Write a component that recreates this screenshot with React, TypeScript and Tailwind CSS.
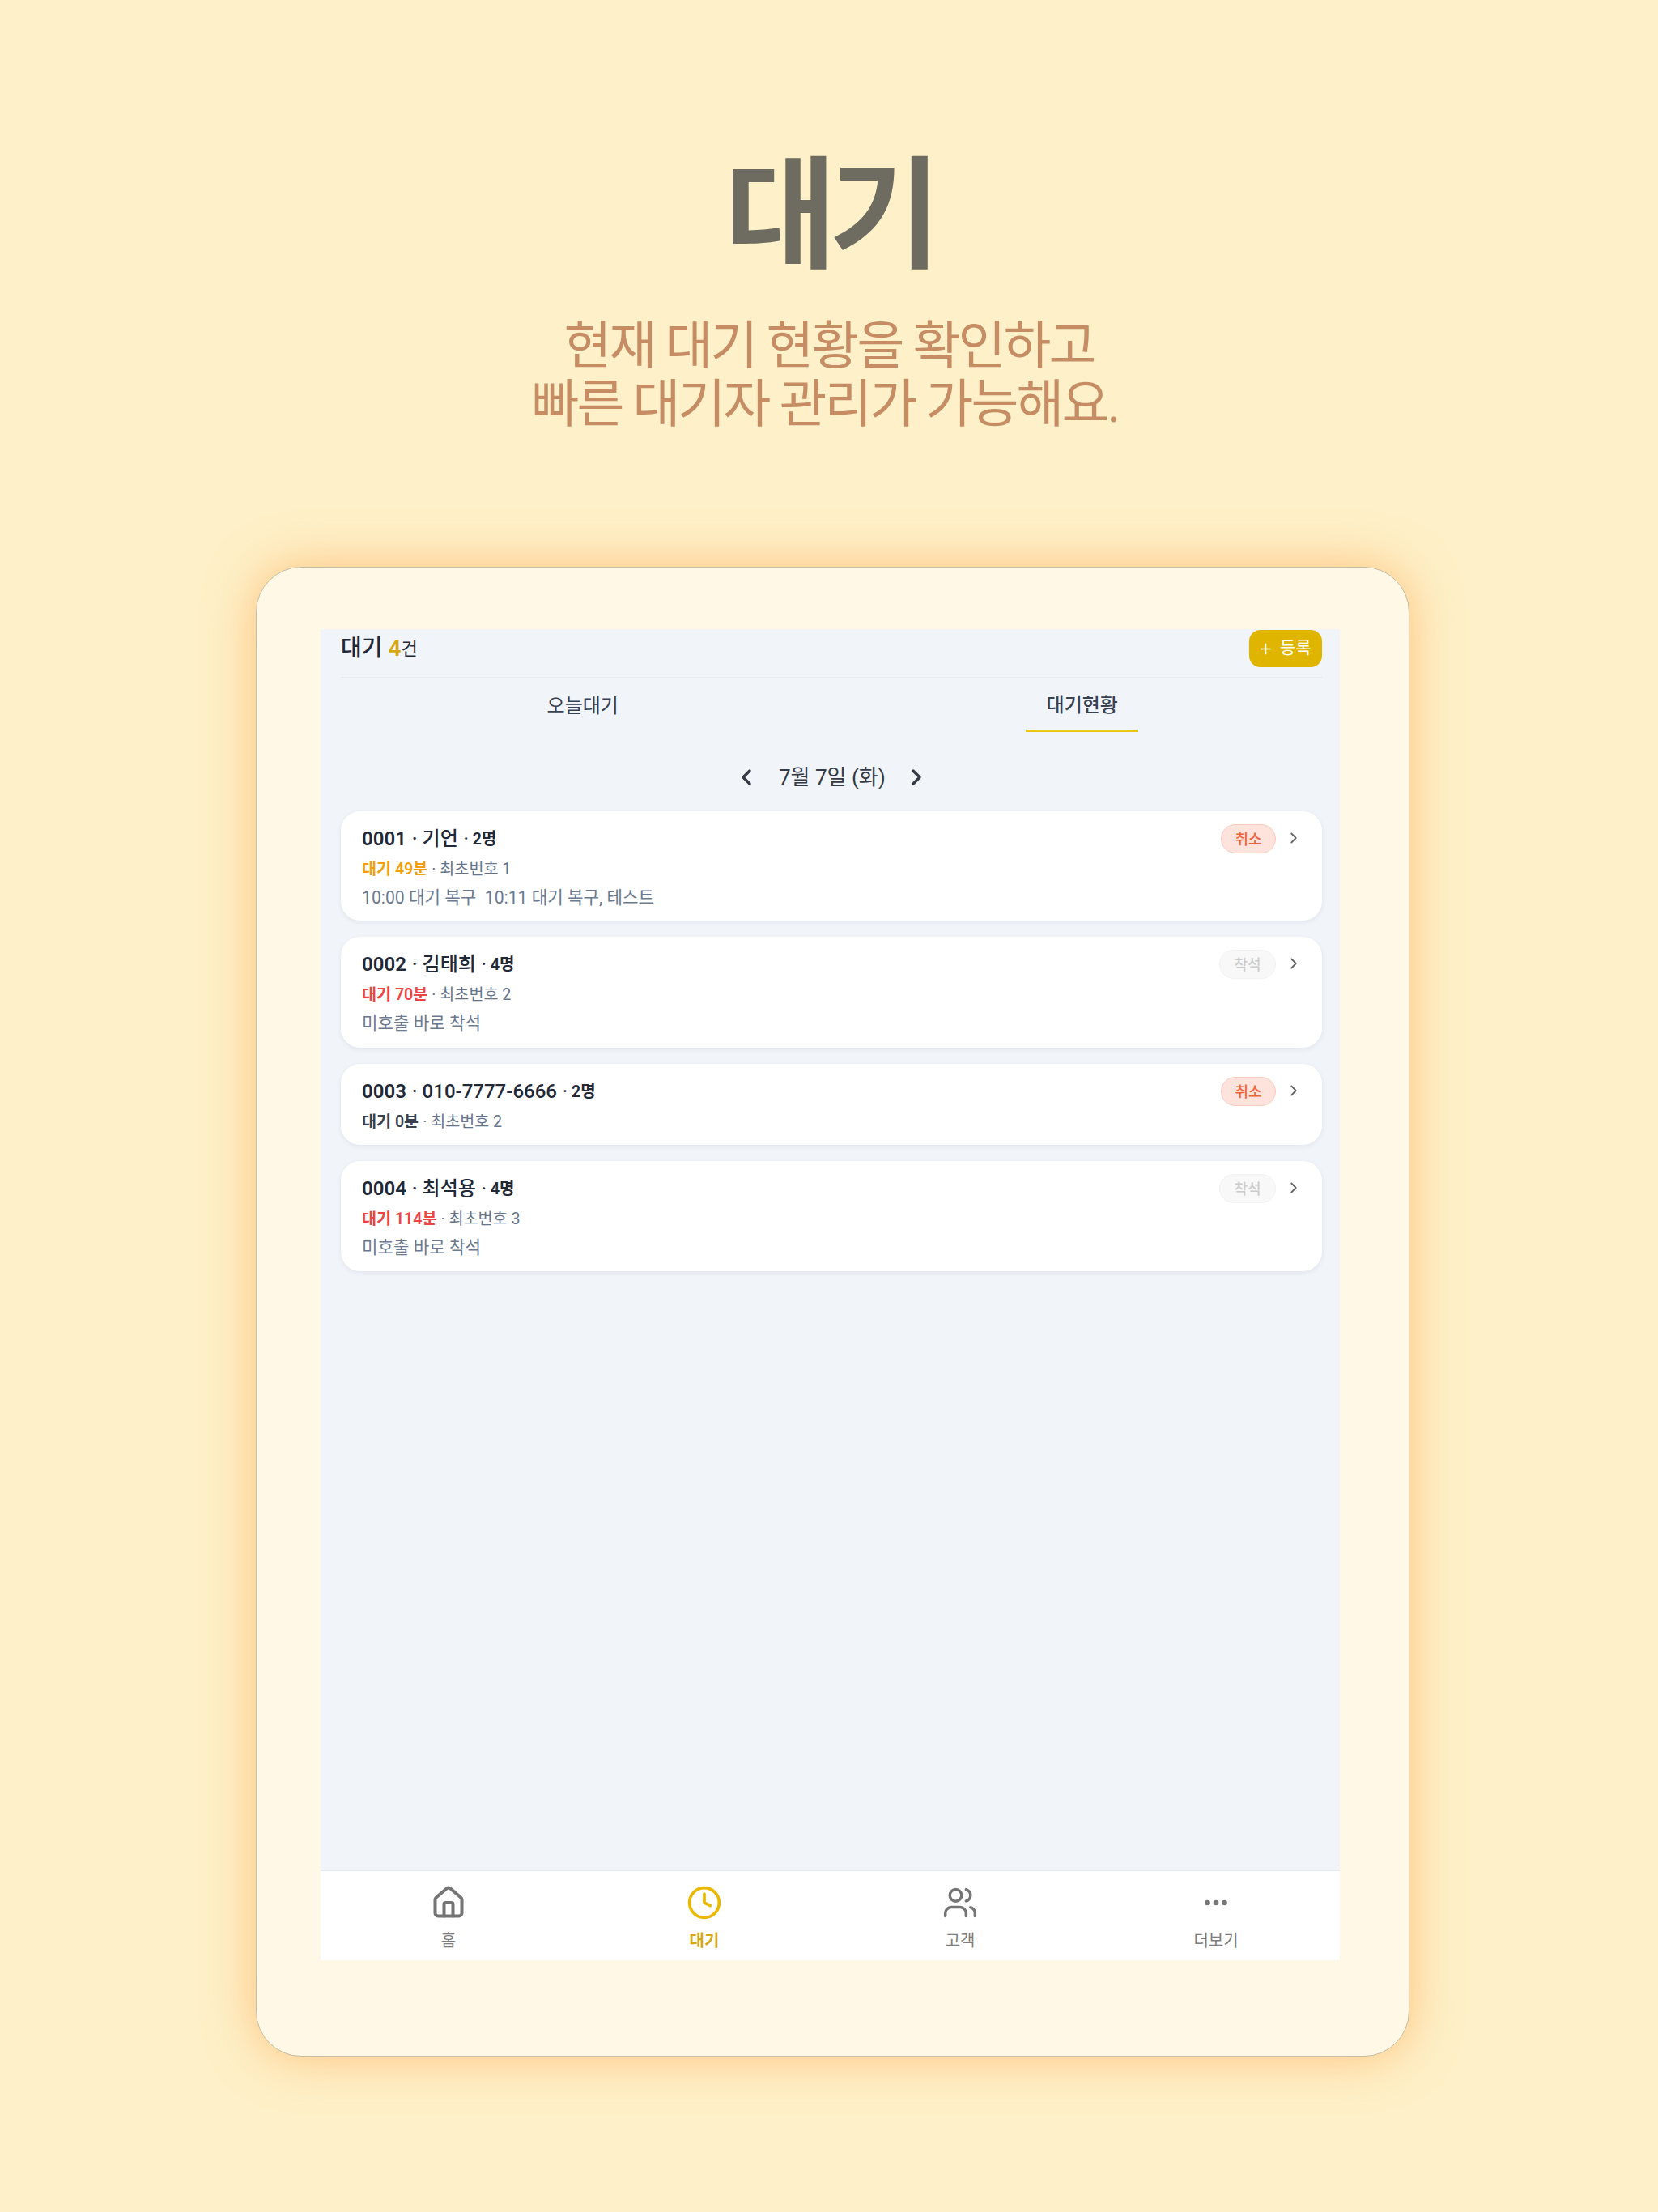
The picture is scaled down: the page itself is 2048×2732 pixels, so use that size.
import { House, Clock, Users, Ellipsis, ChevronLeft, ChevronRight } from "lucide-react";

type Row = {
  id: string;
  name: string;
  people: string;
  wait: string;
  waitColor: string;
  order: string;
  note?: string;
  cancel: boolean;
  h: string;
};

const rows: Row[] = [
  { id: "0001", name: "기언", people: "2명", wait: "대기 49분", waitColor: "text-[#f59e0b]", order: "최초번호 1", note: "10:00 대기 복구\u00a0\u00a010:11 대기 복구, 테스트", cancel: true, h: "h-[135px]" },
  { id: "0002", name: "김태희", people: "4명", wait: "대기 70분", waitColor: "text-[#ef4444]", order: "최초번호 2", note: "미호출 바로 착석", cancel: false, h: "h-[137px]" },
  { id: "0003", name: "010-7777-6666", people: "2명", wait: "대기 0분", waitColor: "text-[#374151]", order: "최초번호 2", cancel: true, h: "h-[100px]" },
  { id: "0004", name: "최석용", people: "4명", wait: "대기 114분", waitColor: "text-[#ef4444]", order: "최초번호 3", note: "미호출 바로 착석", cancel: false, h: "h-[136px]" },
];

function Card({ r }: { r: Row }) {
  return (
    <div className={`${r.h} bg-white rounded-[24px] shadow-[0_2px_6px_rgba(30,41,59,0.07)] pl-[26px] pr-[27px] pt-[16px] flex justify-between`}>
      <div className="flex flex-col pt-[1px]">
        <div className="h-[34px] flex items-center text-[24px] font-semibold text-[#1f2937]">
          <span>{r.id}</span>
          <span className="ml-[7px] font-medium">· {r.name}</span>
          <span className="ml-[7px] text-[20px] font-semibold">· {r.people}</span>
        </div>
        <div className="h-[28px] mt-[7px] flex items-center text-[19.6px] text-[#64748b]">
          <span className={`font-semibold ${r.waitColor}`}>{r.wait}</span>
          <span className="ml-[5px]">· {r.order}</span>
        </div>
        {r.note && <div className="h-[30px] mt-[6px] flex items-center text-[21.2px] text-[#6b7a90]">{r.note}</div>}
      </div>
      <div className="flex items-start gap-[11px]">
        {r.cancel ? (
          <span className="w-[68px] h-[36px] rounded-full bg-[#fee2dc] border border-[#fbcabd] text-[#f0623a] text-[18px] font-medium flex items-center justify-center">취소</span>
        ) : (
          <span className="w-[70px] h-[36px] -ml-[2px] rounded-full bg-[#f8f8f8] border border-[#f2f2f2] text-[#cbcbcb] text-[18px] font-medium flex items-center justify-center">착석</span>
        )}
        <ChevronRight size={22} strokeWidth={2} className="text-[#666666] mt-[6px] -mr-[3px]" />
      </div>
    </div>
  );
}

function NavItem({ label, active, extra, children }: { label: string; active?: boolean; extra?: string; children: React.ReactNode }) {
  return (
    <div className={`flex flex-col items-center ${extra ?? ""}`}>
      <div className={`h-[44px] flex items-center justify-center mt-[17px] ${active ? "text-[#ebb800]" : "text-[#757575]"}`}>{children}</div>
      <div className={`mt-[12px] text-[20px] leading-[26px] ${active ? "text-[#d4a815] font-semibold" : "text-[#7d7d7d]"}`}>{label}</div>
    </div>
  );
}

export default function App() {
  return (
    <div className="w-[2048px] h-[2732px] bg-[#fef0c8] flex flex-col items-center font-['Roboto','Noto_Sans_CJK_KR',sans-serif]">
      <h1 className="mt-[193px] text-[150px] leading-[150px] font-semibold text-[#6e6b60] tracking-[-0.06em]">대기</h1>
      <p className="mt-[49px] text-[64px] leading-[72px] text-[#c68d65] text-center tracking-[-0.045em]">
        현재 대기 현황을 확인하고
        <span className="block pr-[10px]">빠른 대기자 관리가 가능해요.</span>
      </p>
      <div className="mt-[164px] ml-[9px] w-[1425px] h-[1840px] rounded-[56px] bg-[#fff8e7] border border-[#c4bca4] shadow-[0_0_60px_rgba(255,175,90,0.7)] pt-[76px] pl-[79px]">
        <div className="w-[1259px] h-[1644px] bg-[#f1f4f9] flex flex-col">
          <div className="ml-[25px] mr-[22px] h-[61px] border-b-2 border-[#e8ebf0] flex justify-between items-start">
            <div className="h-[48px] flex items-center text-[28px] font-medium text-[#1f2937]">
              대기<span className="ml-[7px] text-[#d4a815] font-semibold">4</span>
              <span className="text-[22px] font-normal">건</span>
            </div>
            <button className="mt-[1px] w-[90px] h-[46px] rounded-[14px] bg-[#e0b500] text-white flex items-center justify-center gap-[10px]">
              <span className="text-[26px] font-light leading-none">+</span>
              <span className="text-[21px]">등록</span>
            </button>
          </div>
          <div className="mx-[25px] h-[66px] grid grid-cols-2 text-[24px] text-[#374151]">
            <div className="flex justify-center items-center pt-[2px] pr-[7px]">
              <span>오늘대기</span>
            </div>
            <div className="flex justify-center">
              <div className="w-[139px] h-[66px] pt-[2px] border-b-[3px] border-[#ebc414] flex items-center justify-center font-medium ml-[18px]">대기현황</div>
            </div>
          </div>
          <div className="h-[98px] pt-[14px] pl-[3px] flex items-center justify-center gap-[24px] text-[#333a44]">
            <ChevronLeft size={32} strokeWidth={2.6} />
            <span className="text-[26px] w-[130px] text-center whitespace-nowrap">7월 7일 (화)</span>
            <ChevronRight size={32} strokeWidth={2.6} />
          </div>
          <div className="ml-[25px] mr-[22px] flex flex-col gap-[20px] flex-1">
            {rows.map((r) => (
              <Card key={r.id} r={r} />
            ))}
          </div>
          <div className="h-[112px] bg-white border-t-2 border-[#e6e9ef] grid grid-cols-[316px_316px_316px_1fr]">
            <NavItem label="홈"><House size={44} strokeWidth={2.2} /></NavItem>
            <NavItem label="대기" active><Clock size={44} strokeWidth={2} /></NavItem>
            <NavItem label="고객"><Users size={44} strokeWidth={1.9} /></NavItem>
            <NavItem label="더보기" extra="pl-[5px]"><Ellipsis size={36} strokeWidth={2.4} /></NavItem>
          </div>
        </div>
      </div>
    </div>
  );
}
